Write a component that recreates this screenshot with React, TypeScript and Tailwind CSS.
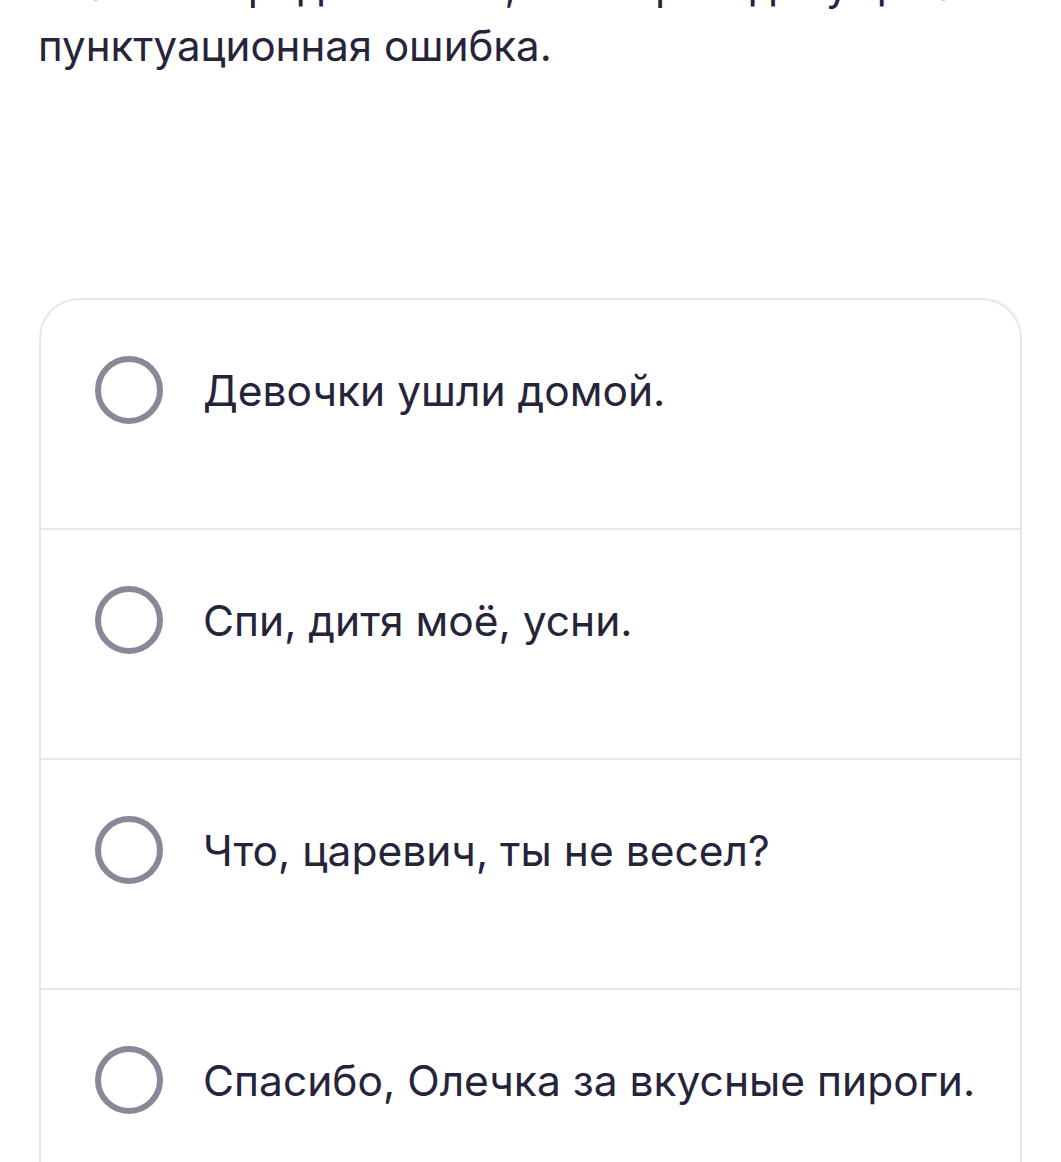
import { Fragment } from 'react';

type Option = {
    id: number;
    text: string;
};

const options: Option[] = [
    { id: 1, text: 'Девочки ушли домой.' },
    { id: 2, text: 'Спи, дитя моё, усни.' },
    { id: 3, text: 'Что, царевич, ты не весел?' },
    { id: 4, text: 'Спасибо, Олечка за вкусные пироги.' },
];

function OptionRow({ text }: { text: string }) {
    return (
        <label className="flex items-start h-[228px] pl-[54px] pt-[56px] cursor-pointer">
            <span className="shrink-0 w-[68px] h-[68px] rounded-full border-[6px] border-[#8a8898] bg-white" />
            <span className="ml-[40px] mt-[9px] text-[42.5px] leading-[52px] text-[#26243a]">
                {text}
            </span>
        </label>
    );
}

export default function App() {
    return (
        <div
            className="min-h-[1162px] bg-white px-[38px] overflow-hidden"
            style={{ fontFamily: 'Inter, "Noto Sans", sans-serif' }}
        >
            <p className="-mt-[46px] text-[42px] leading-[61px] text-[#26243a]">
                Укажите предложение, в котором допущена пунктуационная ошибка.
            </p>
            <div className="mt-[222px] mx-[1px] rounded-t-[40px] border-2 border-b-0 border-[#e7e6ee]">
                {options.map((option, i) => (
                    <Fragment key={option.id}>
                        {i > 0 && <div className="h-[2px] bg-[#e7e6ee]" />}
                        <OptionRow text={option.text} />
                    </Fragment>
                ))}
            </div>
        </div>
    );
}
